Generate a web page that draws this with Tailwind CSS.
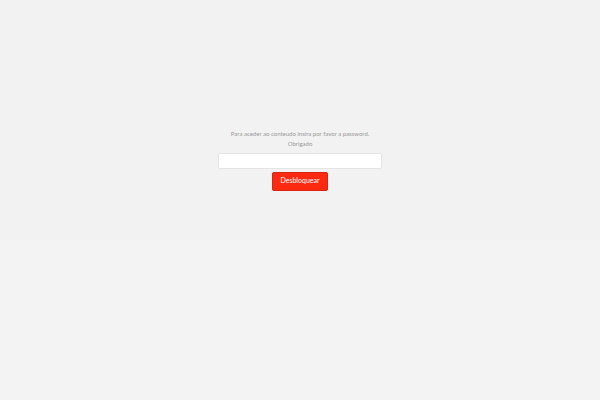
<!DOCTYPE html>
<html lang="pt">
<head>
<meta charset="utf-8">
<meta name="viewport" content="width=device-width, initial-scale=1">
<title>Acesso protegido</title>
<script src="https://cdn.jsdelivr.net/npm/@tailwindcss/browser@4"></script>
</head>
<body class="min-h-screen bg-[#f3f3f3] font-['Lato',sans-serif]">
<main class="flex flex-col items-center bg-[#f2f2f2] px-4 pt-[129px] pb-12">
<form class="flex w-full max-w-[164px] flex-col items-center">
<label for="password" class="text-center text-[6px] leading-[10px] text-[#999]">Para aceder ao conteudo insira por favor a password.<br>Obrigado</label>
<input id="password" type="password" class="mt-1 h-4 w-full rounded-xs border border-[#e4e4e4] bg-white px-1 text-[7px] outline-none">
<button type="submit" class="mt-[3px] h-[19px] rounded-xs border border-[#d9240f] bg-[#fd2a12] px-[7px] pb-[2px] text-[7px] leading-none text-white">Desbloquear</button>
</form>
</main>
</body>
</html>
